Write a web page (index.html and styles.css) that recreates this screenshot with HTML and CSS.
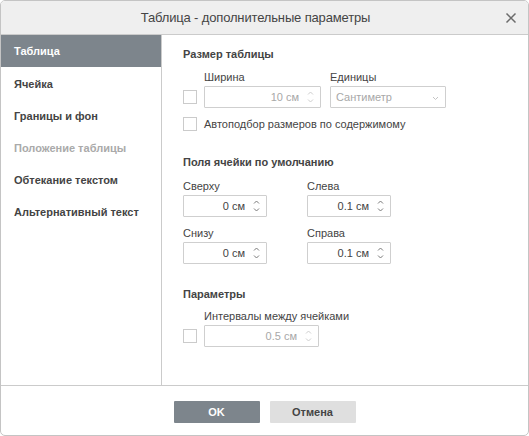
FILE: index.html
```html
<!DOCTYPE html>
<html lang="ru">
<head>
<meta charset="utf-8">
<title>Таблица - дополнительные параметры</title>
<link rel="stylesheet" href="styles.css">
</head>
<body>
<div class="dialog">
  <div class="header">
    <div class="title">Таблица - дополнительные параметры</div>
    <svg class="close" width="12" height="12" viewBox="0 0 12 12"><path d="M1.5 1.5 L10.5 10.5 M10.5 1.5 L1.5 10.5" stroke="#6b6b6b" stroke-width="1.5" fill="none"/></svg>
  </div>
  <div class="body">
    <div class="sidebar">
      <div class="nav-item active">Таблица</div>
      <div class="nav-item">Ячейка</div>
      <div class="nav-item">Границы и фон</div>
      <div class="nav-item disabled">Положение таблицы</div>
      <div class="nav-item">Обтекание текстом</div>
      <div class="nav-item">Альтернативный текст</div>
    </div>
    <div class="content">
      <div class="section-title first">Размер таблицы</div>
      <div class="size-row">
        <span class="checkbox cb-width"></span>
        <div class="field">
          <div class="label">Ширина</div>
          <div class="input wide disabled"><span class="val">10 см</span>
            <svg class="spin" width="7" height="14" viewBox="0 0 7 14"><path d="M1 4.5 L3.5 2 L6 4.5 M1 9.5 L3.5 12 L6 9.5" stroke="#cfcfcf" stroke-width="1" fill="none"/></svg>
          </div>
        </div>
        <div class="field">
          <div class="label">Единицы</div>
          <div class="select disabled"><span>Сантиметр</span>
            <svg class="chev" width="7" height="5" viewBox="0 0 7 5"><path d="M1 1 L3.5 3.5 L6 1" stroke="#c4c4c4" stroke-width="1" fill="none"/></svg>
          </div>
        </div>
      </div>
      <div class="check-row">
        <span class="checkbox"></span>
        <span class="check-label">Автоподбор размеров по содержимому</span>
      </div>

      <div class="section-title margins">Поля ячейки по умолчанию</div>
      <div class="grid">
        <div class="field">
          <div class="label">Сверху</div>
          <div class="input small"><span class="val">0 см</span>
            <svg class="spin" width="7" height="14" viewBox="0 0 7 14"><path d="M1 4.5 L3.5 2 L6 4.5 M1 9.5 L3.5 12 L6 9.5" stroke="#7a7a7a" stroke-width="1" fill="none"/></svg>
          </div>
        </div>
        <div class="field">
          <div class="label">Слева</div>
          <div class="input small"><span class="val">0.1 см</span>
            <svg class="spin" width="7" height="14" viewBox="0 0 7 14"><path d="M1 4.5 L3.5 2 L6 4.5 M1 9.5 L3.5 12 L6 9.5" stroke="#7a7a7a" stroke-width="1" fill="none"/></svg>
          </div>
        </div>
        <div class="field">
          <div class="label">Снизу</div>
          <div class="input small"><span class="val">0 см</span>
            <svg class="spin" width="7" height="14" viewBox="0 0 7 14"><path d="M1 4.5 L3.5 2 L6 4.5 M1 9.5 L3.5 12 L6 9.5" stroke="#7a7a7a" stroke-width="1" fill="none"/></svg>
          </div>
        </div>
        <div class="field">
          <div class="label">Справа</div>
          <div class="input small"><span class="val">0.1 см</span>
            <svg class="spin" width="7" height="14" viewBox="0 0 7 14"><path d="M1 4.5 L3.5 2 L6 4.5 M1 9.5 L3.5 12 L6 9.5" stroke="#7a7a7a" stroke-width="1" fill="none"/></svg>
          </div>
        </div>
      </div>

      <div class="section-title params">Параметры</div>
      <div class="size-row spacing-row">
        <span class="checkbox cb-spacing"></span>
        <div class="field">
          <div class="label">Интервалы между ячейками</div>
          <div class="input wide2 disabled"><span class="val">0.5 см</span>
            <svg class="spin" width="7" height="14" viewBox="0 0 7 14"><path d="M1 4.5 L3.5 2 L6 4.5 M1 9.5 L3.5 12 L6 9.5" stroke="#cfcfcf" stroke-width="1" fill="none"/></svg>
          </div>
        </div>
      </div>
    </div>
  </div>
  <div class="footer">
    <button class="btn primary">OK</button>
    <button class="btn secondary">Отмена</button>
  </div>
</div>
</body>
</html>
```
FILE: styles.css
```css
* { box-sizing: border-box; }
html, body { margin: 0; padding: 0; background: #fff; }
body {
  font-family: "Liberation Sans", Arial, sans-serif;
  font-size: 11px;
  color: #444;
}
.dialog {
  width: 529px;
  height: 436px;
  border: 1px solid #c4c4c4;
  border-radius: 5px;
  overflow: hidden;
  display: flex;
  flex-direction: column;
  background: #fff;
}
.header {
  height: 34px;
  flex: 0 0 34px;
  background: #efefef;
  border-bottom: 1px solid #cbcbcb;
  display: flex;
  align-items: center;
  justify-content: center;
  padding-right: 18px;
  position: relative;
}
.title {
  font-size: 13px;
  letter-spacing: -0.15px;
  color: #444;
  line-height: 16px;
}
.close {
  position: absolute;
  right: 11px;
  top: 11px;
}
.body {
  flex: 1;
  display: flex;
  min-height: 0;
}
.sidebar {
  width: 161px;
  flex: 0 0 161px;
  border-right: 1px solid #cbcbcb;
}
.nav-item {
  height: 32px;
  line-height: 33px;
  padding-left: 13px;
  font-weight: bold;
  font-size: 11px;
  color: #444;
  white-space: nowrap;
}
.nav-item.active {
  background: #7d858c;
  color: #fff;
}
.nav-item:nth-child(2) { height: 33px; line-height: 34px; }
.nav-item.disabled {
  color: #aaa;
}
.content {
  flex: 1;
  padding: 0 0 0 21px;
}
.section-title {
  font-weight: bold;
  line-height: 14px;
  height: 14px;
}
.section-title.first { margin-top: 12px; }
.section-title.margins { margin-top: 24px; }
.section-title.params { margin-top: 23px; }
.size-row {
  display: flex;
  align-items: flex-end;
  margin-top: 9px;
}
.checkbox {
  width: 14px;
  height: 14px;
  border: 1px solid #cbcbcb;
  background: #fff;
  flex: 0 0 14px;
  display: inline-block;
}
.cb-width, .cb-spacing {
  margin-right: 7px;
  margin-bottom: 4px;
}
.field { display: flex; flex-direction: column; }
.size-row .field + .field { margin-left: 9px; }
.label {
  line-height: 14px;
  height: 14px;
  margin-bottom: 2px;
  white-space: nowrap;
}
.input, .select {
  height: 22px;
  border: 1px solid #cfcfcf;
  border-radius: 1px;
  display: flex;
  align-items: center;
  position: relative;
  background: #fff;
}
.input { justify-content: flex-end; padding-right: 21px; }
.input .val { line-height: 14px; }
.input.disabled .val, .select.disabled span { color: #a8a8a8; }
.spin {
  position: absolute;
  right: 6px;
  top: 3px;
}
.input.wide { width: 117px; }
.input.wide2 { width: 115px; }
.input.small { width: 84px; }
.select {
  width: 116px;
  padding-left: 5px;
}
.chev { position: absolute; right: 6px; top: 9px; }
.check-row {
  display: flex;
  align-items: center;
  margin-top: 8px;
  height: 15px;
}
.check-row .checkbox { margin-right: 7px; }
.check-label { line-height: 14px; }
.grid {
  display: grid;
  grid-template-columns: 84px 84px;
  column-gap: 40px;
  row-gap: 9px;
  margin-top: 10px;
  width: max-content;
}
.spacing-row { margin-top: 8px; }
.footer {
  flex: 0 0 50px;
  height: 50px;
  border-top: 1px solid #cbcbcb;
  display: flex;
  justify-content: center;
  align-items: flex-start;
  padding-top: 15px;
  gap: 10px;
}
.btn {
  width: 86px;
  height: 22px;
  border: none;
  border-radius: 1px;
  font-family: "Liberation Sans", Arial, sans-serif;
  font-size: 11px;
  font-weight: bold;
  padding: 0;
}
.btn.primary { background: #7d858c; color: #fff; }
.btn.secondary { background: #dfdfdf; color: #444; }
```
